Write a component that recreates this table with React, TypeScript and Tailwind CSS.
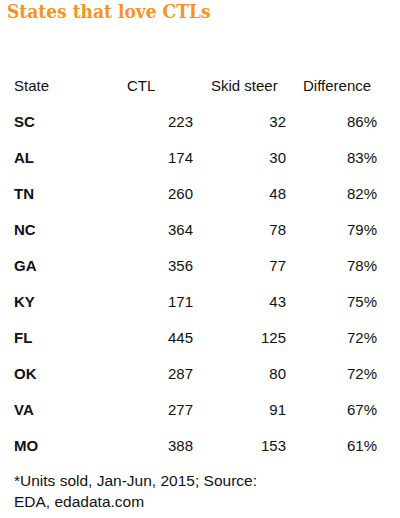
import React from 'react';

const rows = [
  { state: 'SC', ctl: 223, skid: 32, diff: '86%' },
  { state: 'AL', ctl: 174, skid: 30, diff: '83%' },
  { state: 'TN', ctl: 260, skid: 48, diff: '82%' },
  { state: 'NC', ctl: 364, skid: 78, diff: '79%' },
  { state: 'GA', ctl: 356, skid: 77, diff: '78%' },
  { state: 'KY', ctl: 171, skid: 43, diff: '75%' },
  { state: 'FL', ctl: 445, skid: 125, diff: '72%' },
  { state: 'OK', ctl: 287, skid: 80, diff: '72%' },
  { state: 'VA', ctl: 277, skid: 91, diff: '67%' },
  { state: 'MO', ctl: 388, skid: 153, diff: '61%' },
];

const cols = 'grid grid-cols-[113px_84px_92px_74px] h-[36px] items-center';

export default function App() {
  return (
    <div className="w-[400px] h-[518px] bg-white text-[#111] font-['Liberation_Sans',Arial,sans-serif] text-[15px]">
      {/* Title */}
      <h1 className="pl-[7px] h-[22px] leading-[22px] mb-[46px] text-[19px] font-bold text-[#f7931e] font-['DejaVu_Serif_Condensed','DejaVu_Serif',serif]">
        States that love CTLs
      </h1>

      {/* Table */}
      <div className="pl-[14px]">
        <div className={cols}>
          <div>State</div>
          <div>CTL</div>
          <div>Skid steer</div>
          <div>Difference</div>
        </div>
        {rows.map((r) => (
          <div key={r.state} className={cols}>
            <div className="font-bold">{r.state}</div>
            <div className="text-right pr-[18px]">{r.ctl}</div>
            <div className="text-right pr-[17px]">{r.skid}</div>
            <div className="text-right">{r.diff}</div>
          </div>
        ))}
      </div>

      {/* Footnote */}
      <p className="pl-[14px] mt-[6px] leading-[21px] text-[15.5px]">
        *Units sold, Jan-Jun, 2015; Source:
        <br />
        EDA, edadata.com
      </p>
    </div>
  );
}
